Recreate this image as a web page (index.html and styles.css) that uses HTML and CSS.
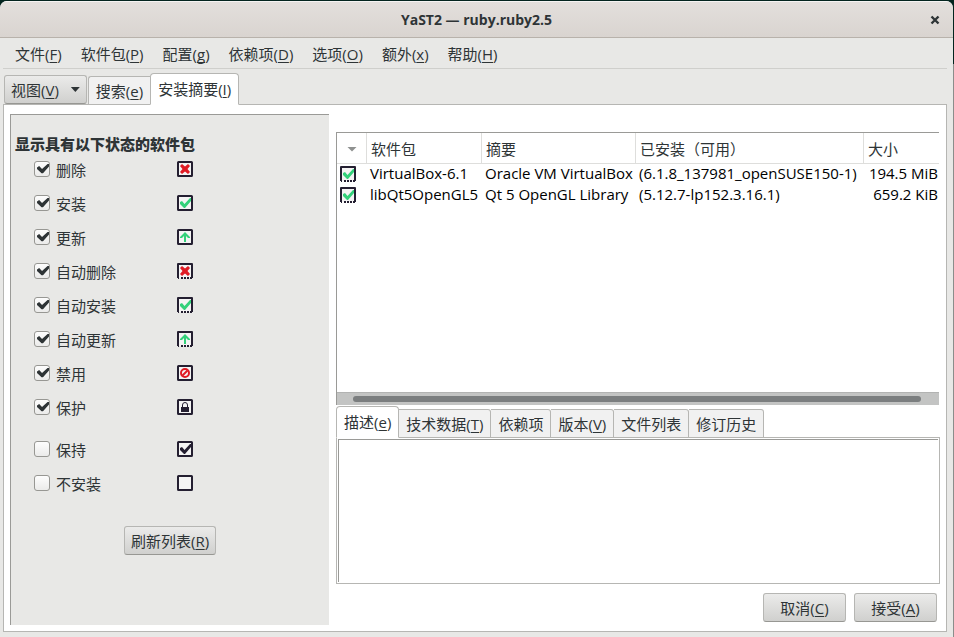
FILE: index.html
```html
<!DOCTYPE html>
<html lang="zh-CN">
<head>
    <meta charset="utf-8">
    <title>YaST2 — ruby.ruby2.5</title>
    <link rel="stylesheet" href="styles.css">
</head>
<body>
    <!-- shared icon parts -->
    <svg class="defs" width="0" height="0">
        <defs>
            <g id="box">
                <rect x="1" y="1" width="14" height="14" rx="0.5" fill="#f4f4f4" stroke="#241f31" stroke-width="2"/>
            </g>
            <g id="autobox">
                <rect x="1" y="1" width="14" height="14" fill="#f4f4f4"/>
                <path d="M1 15V1H15V15" fill="none" stroke="#241f31" stroke-width="2" stroke-linejoin="round"/>
                <path d="M1 15H15" stroke="#241f31" stroke-width="2" stroke-dasharray="1 2 2 1 2 1 2 1 2"/>
            </g>
            <path id="cross" d="M5 3L8 5.5L11 3L13 5L10.5 8L13 11L11 13L8 10.5L5 13L3 11L5.5 8L3 5Z" fill="#e01b24"/>
            <path id="tick" d="M3 7L5 6L7.5 9L13 3H14V6L8 13H7L3 9Z"/>
            <path id="arrow" d="M8 3L13 8V9H11L9 7V13H7V7L5 9H3V8Z" fill="#33d17a"/>
        </defs>
    </svg>

    <div class="window">
        <header class="titlebar">
            <h1>YaST2 — ruby.ruby2.5</h1>
            <button class="close" aria-label="关闭">
                <svg width="10" height="10" viewBox="0 0 10 10"><path d="M1.5 1.5L8.5 8.5M8.5 1.5L1.5 8.5" stroke="#2e3436" stroke-width="2.4"/></svg>
            </button>
        </header>

        <nav class="menubar">
            <button>文件(<u>F</u>)</button>
            <button>软件包(<u>P</u>)</button>
            <button>配置(<u>g</u>)</button>
            <button>依赖项(<u>D</u>)</button>
            <button>选项(<u>O</u>)</button>
            <button>额外(<u>x</u>)</button>
            <button>帮助(<u>H</u>)</button>
        </nav>

        <div class="tabs main-tabs">
            <button class="btn view-btn"><span>视图(<u>V</u>)</span><span class="caret"></span></button>
            <button class="tab">搜索(<u>e</u>)</button>
            <button class="tab active">安装摘要(<u>I</u>)</button>
        </div>

        <main class="page">
            <section class="filters">
                <h2>显示具有以下状态的软件包</h2>
                <div class="status">
                    <label><input type="checkbox" checked>删除</label>
                    <svg class="icon" viewBox="0 0 16 16"><use href="#box"/><use href="#cross"/></svg>
                </div>
                <div class="status">
                    <label><input type="checkbox" checked>安装</label>
                    <svg class="icon green" viewBox="0 0 16 16"><use href="#box"/><use href="#tick"/></svg>
                </div>
                <div class="status">
                    <label><input type="checkbox" checked>更新</label>
                    <svg class="icon" viewBox="0 0 16 16"><use href="#box"/><use href="#arrow"/></svg>
                </div>
                <div class="status">
                    <label><input type="checkbox" checked>自动删除</label>
                    <svg class="icon" viewBox="0 0 16 16"><use href="#autobox"/><use href="#cross"/></svg>
                </div>
                <div class="status">
                    <label><input type="checkbox" checked>自动安装</label>
                    <svg class="icon green" viewBox="0 0 16 16"><use href="#autobox"/><use href="#tick"/></svg>
                </div>
                <div class="status">
                    <label><input type="checkbox" checked>自动更新</label>
                    <svg class="icon" viewBox="0 0 16 16"><use href="#autobox"/><use href="#arrow"/></svg>
                </div>
                <div class="status">
                    <label><input type="checkbox" checked>禁用</label>
                    <svg class="icon" viewBox="0 0 16 16">
                        <use href="#box"/>
                        <circle cx="8" cy="8" r="4" fill="none" stroke="#e01b24" stroke-width="2"/>
                        <path d="M5.5 10.5L10.5 5.5" stroke="#e01b24" stroke-width="2"/>
                    </svg>
                </div>
                <div class="status">
                    <label><input type="checkbox" checked>保护</label>
                    <svg class="icon" viewBox="0 0 16 16">
                        <use href="#box"/>
                        <path d="M5.5 8V6A2.5 2.5 0 0 1 10.5 6V8" fill="none" stroke="#241f31"/>
                        <rect x="4" y="8" width="8" height="5" fill="#241f31"/>
                    </svg>
                </div>
                <div class="status spaced">
                    <label><input type="checkbox">保持</label>
                    <svg class="icon dark" viewBox="0 0 16 16"><use href="#box"/><use href="#tick"/></svg>
                </div>
                <div class="status">
                    <label><input type="checkbox">不安装</label>
                    <svg class="icon" viewBox="0 0 16 16"><use href="#box"/></svg>
                </div>
                <button class="btn refresh">刷新列表(<u>R</u>)</button>
            </section>

            <section class="content">
                <div class="list">
                    <table>
                        <colgroup>
                            <col class="c-state">
                            <col class="c-name">
                            <col class="c-summary">
                            <col>
                            <col class="c-size">
                        </colgroup>
                        <thead>
                            <tr>
                                <th><span class="caret sort"></span></th>
                                <th>软件包</th>
                                <th>摘要</th>
                                <th>已安装（可用）</th>
                                <th>大小</th>
                            </tr>
                        </thead>
                        <tbody>
                            <tr>
                                <td><svg class="icon green" viewBox="0 0 16 16"><use href="#autobox"/><use href="#tick"/></svg></td>
                                <td>VirtualBox-6.1</td>
                                <td>Oracle VM VirtualBox</td>
                                <td>(6.1.8_137981_openSUSE150-1)</td>
                                <td class="size">194.5 MiB</td>
                            </tr>
                            <tr>
                                <td><svg class="icon green" viewBox="0 0 16 16"><use href="#autobox"/><use href="#tick"/></svg></td>
                                <td>libQt5OpenGL5</td>
                                <td>Qt 5 OpenGL Library</td>
                                <td>(5.12.7-lp152.3.16.1)</td>
                                <td class="size">659.2 KiB</td>
                            </tr>
                        </tbody>
                    </table>
                    <div class="scrollbar"><div class="thumb"></div></div>
                </div>

                <div class="tabs detail-tabs">
                    <button class="tab active">描述(<u>e</u>)</button>
                    <button class="tab">技术数据(<u>T</u>)</button>
                    <button class="tab">依赖项</button>
                    <button class="tab">版本(<u>V</u>)</button>
                    <button class="tab">文件列表</button>
                    <button class="tab">修订历史</button>
                </div>
                <div class="details"><div class="details-text"></div></div>

                <div class="actions">
                    <button class="btn">取消(<u>C</u>)</button>
                    <button class="btn">接受(<u>A</u>)</button>
                </div>
            </section>
        </main>
    </div>
</body>
</html>
```
FILE: styles.css
```css
* {
    box-sizing: border-box;
}

body {
    margin: 0;
    height: 100vh;
    padding: 1px 1px 0 0;
    background: linear-gradient(#04251f 64px, #8b8d8b 64px);
    color: #2e3436;
    font: 15px/20px "Open Sans", "Noto Sans CJK SC", sans-serif;
}

button {
    font: inherit;
    color: inherit;
    background: none;
    border: none;
    padding: 0;
    white-space: nowrap;
}

u {
    text-underline-offset: 2px;
    text-decoration-thickness: 1px;
    text-decoration-skip-ink: none;
}

.defs {
    position: absolute;
}

.window {
    display: flex;
    flex-direction: column;
    height: 100%;
    background: #e8e8e6;
    border-radius: 7px 7px 0 0;
    overflow: hidden;
}

/* title bar */
.titlebar {
    display: grid;
    grid-template-columns: 36px 1fr 36px;
    align-items: center;
    height: 37px;
    background: linear-gradient(#e3dfdc, #d9d4d0);
    border-top: 1px solid #f6f4f3;
    border-bottom: 1px solid #b8b2ab;
}

.titlebar h1 {
    grid-column: 2;
    margin: 0;
    font-size: 14px;
    text-align: center;
}

.close {
    display: flex;
    justify-content: center;
}

/* menu */
.menubar {
    display: flex;
    gap: 19px;
    height: 31px;
    margin: 0 6px 0 3px;
    padding: 2px 12px 0;
    border-bottom: 1px solid #cfcfcc;
}

/* tabs */
.tabs {
    display: flex;
    align-items: flex-end;
    position: relative;
    z-index: 1;
    margin-bottom: -1px;
}

.main-tabs {
    height: 36px;
    padding-left: 4px;
}

.tab {
    height: 29px;
    padding: 0 7px;
    background: #f1f1f1;
    border: 1px solid #b6b6b3;
    border-left-width: 0;
    border-radius: 0 3px 0 0;
}

.tab.active {
    height: 32px;
    background: #fff;
    border-bottom-color: #fff;
    border-left-width: 1px;
    border-radius: 4px 4px 0 0;
}

.main-tabs .tab:not(.active) {
    border-left-width: 1px;
    border-right-width: 0;
    border-radius: 3px 0 0 0;
}

.btn {
    height: 29px;
    padding: 0 6px;
    background: linear-gradient(#ebebea, #d0d0ce);
    border: 1px solid #b6b6b3;
    border-bottom-color: #979793;
    border-radius: 3px;
}

.view-btn {
    display: flex;
    align-items: center;
    gap: 12px;
    margin: 0 1px 1px 0;
}

.caret {
    width: 9px;
    height: 5px;
    background: #2e3436;
    clip-path: polygon(0 0, 100% 0, 50% 100%);
}

/* page */
.page {
    flex: 1;
    display: flex;
    gap: 7px;
    margin: 0 6px 5px 3px;
    padding: 9px 6px 6px;
    background: #fff;
    border: 1px solid #b6b6b3;
}

.filters {
    flex: 0 0 319px;
    padding: 19px 0 0 4px;
    background: #e8e8e6;
    border-top: 1px solid #9a9a97;
    border-left: 1px solid #9a9a97;
}

.filters h2 {
    margin: 0;
    font-size: 15px;
    font-weight: 900;
    line-height: 20px;
}

.status {
    display: grid;
    grid-template-columns: 143px 16px;
    height: 34px;
    padding: 6px 0 0 19px;
}

.status.spaced {
    margin-top: 8px;
}

.status label {
    display: flex;
    gap: 6px;
}

.status input {
    appearance: none;
    width: 16px;
    height: 16px;
    margin: 1px 0 0;
    background: linear-gradient(#fdfdfd, #ebebea);
    border: 1px solid #979793;
    border-radius: 3px;
}

.status input:checked::before {
    content: "";
    display: block;
    width: 12px;
    height: 11px;
    margin: 1px 0 0 2px;
    background: #2e3436;
    clip-path: polygon(0 40%, 18% 28%, 42% 55%, 88% 8%, 100% 8%, 100% 32%, 50% 94%, 38% 94%, 0 55%);
}

.icon {
    display: block;
    width: 16px;
    height: 16px;
}

.status .icon {
    margin-top: 1px;
}

.icon.green {
    fill: #33d17a;
}

.icon.dark {
    fill: #241f31;
}

.refresh {
    display: block;
    margin: 24px auto 0 109px;
}

/* package list */
.content {
    flex: 1;
    display: flex;
    flex-direction: column;
    min-width: 0;
    padding-top: 18px;
}

.list {
    flex: 1;
    display: flex;
    flex-direction: column;
    justify-content: space-between;
    margin: 0 1px 1px 0;
    border-top: 1px solid #9a9a97;
    border-left: 1px solid #9a9a97;
}

table {
    width: 100%;
    table-layout: fixed;
    border-collapse: separate;
    border-spacing: 0;
}

.c-state {
    width: 30px;
}

.c-name {
    width: 115px;
}

.c-summary {
    width: 154px;
}

.c-size {
    width: 75px;
}

th {
    height: 31px;
    padding: 2px 4px 0;
    border-right: 1px solid #dededc;
    border-bottom: 1px solid #dededc;
    font-weight: normal;
    text-align: left;
}

th:last-child {
    border-right: none;
}

.sort {
    display: block;
    width: 10px;
    margin-left: 6px;
    background: #8f9190;
}

td {
    height: 21px;
    padding: 0 3px 2px;
    color: #000;
    line-height: 19px;
    white-space: nowrap;
}

td.size {
    padding: 0 1px 2px 0;
    text-align: right;
}

.scrollbar {
    height: 13px;
    padding: 3px 18px 3px 16px;
    background: #c3c4c3;
    border-top: 1px solid #b2b3b2;
}

.thumb {
    height: 6px;
    background: #7b7e7f;
    border-radius: 3px;
}

/* details */
.details {
    height: 147px;
    padding: 1px;
    border: 1px solid #b6b6b3;
}

.details-text {
    height: 100%;
    border-top: 1px solid #9a9a97;
    border-left: 1px solid #9a9a97;
}

.actions {
    display: flex;
    justify-content: flex-end;
    gap: 8px;
    padding: 9px 3px 3px;
}

.actions .btn {
    width: 83px;
}
```
